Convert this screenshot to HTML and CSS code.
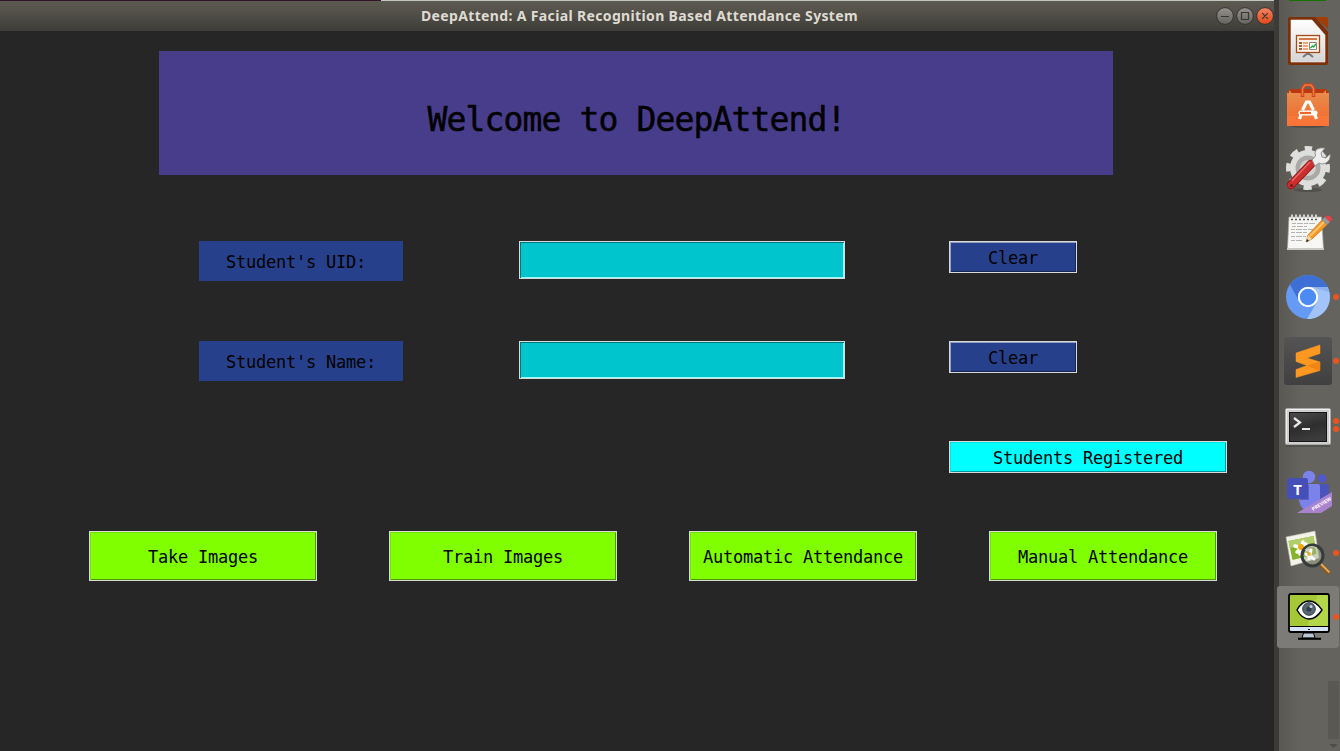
FILE: index.html
```html
<!DOCTYPE html>
<html lang="en">
<head>
<meta charset="utf-8">
<title>DeepAttend</title>
<link rel="stylesheet" href="styles.css">
</head>
<body>
<div class="desktop">
  <div class="window">
    <div class="strip"></div>
    <header class="titlebar">
      <h1 class="title">DeepAttend: A Facial Recognition Based Attendance System</h1>
      <svg class="controls" width="60" height="20" viewBox="0 0 60 20">
        <defs>
          <linearGradient id="ctl" x2="0" y2="1"><stop stop-color="#93918a"/><stop offset="1" stop-color="#65645e"/></linearGradient>
          <linearGradient id="cls" x2="0" y2="1"><stop stop-color="#f58463"/><stop offset="1" stop-color="#df4817"/></linearGradient>
        </defs>
        <g stroke="#33322e"><circle cx="10" cy="10" r="8.4" fill="url(#ctl)"/><circle cx="30" cy="10" r="8.4" fill="url(#ctl)"/><circle cx="50" cy="10" r="8.4" fill="url(#cls)"/></g>
        <path d="M6 10.500h8M26.500 6.500h7v7h-7zM47.200 7.200l5.600 5.600M52.800 7.200l-5.600 5.600" fill="none" stroke="#373630" stroke-width="1.200"/>
      </svg>
    </header>
    <main class="content">
      <div class="banner">Welcome to DeepAttend!</div>
      <div class="form">
        <label class="label" for="uid">Student's UID:</label>
        <input class="entry" id="uid" type="text">
        <button class="btn btn-blue">Clear</button>
        <label class="label" for="name">Student's Name:</label>
        <input class="entry" id="name" type="text">
        <button class="btn btn-blue">Clear</button>
        <button class="btn btn-cyan">Students Registered</button>
      </div>
      <div class="actions">
        <button class="btn btn-green">Take Images</button>
        <button class="btn btn-green">Train Images</button>
        <button class="btn btn-green">Automatic Attendance</button>
        <button class="btn btn-green">Manual Attendance</button>
      </div>
    </main>
  </div>
  <nav class="launcher">
    <div class="peek"></div>
    <svg class="item" viewBox="1279 9 61 64">
      <defs><linearGradient id="paper" x2="0" y2="1"><stop stop-color="#fff"/><stop offset="1" stop-color="#d5d5d7"/></linearGradient></defs>
      <path d="M1290 17h25l13 15v31q0 2-2 2h-36q-2 0-2-2v-44q0-2 2-2z" fill="#7d3008"/>
      <path d="M1315 17h11q2 0 2 2v10z" fill="#a33e03"/>
      <path d="M1291 20h21l13 15v27h-34z" fill="url(#paper)" stroke="#eee" stroke-width=".6"/>
      <path d="M1308 53l-5 4M1308 53l5 4M1308 52v3" stroke="#777" stroke-width="2"/>
      <rect x="1296.500" y="35.500" width="23" height="17" fill="#fff3e9" stroke="#a44b1a" stroke-width="1.300"/>
      <path d="M1299 39h18" stroke="#d17845" stroke-width="2"/>
      <path d="M1299 43h3M1299 46h3M1299 49h3" stroke="#7d3008" stroke-width="1.300"/>
      <path d="M1303 43h5M1303 46h5M1303 49h5" stroke="#e68f5b" stroke-width="1.300"/>
      <path d="M1309.500 42.500h7v7h-7z" fill="#fff" stroke="#888"/><path d="M1310.500 48l2-2 1 1 2.500-3" stroke="#22a432" stroke-width="1.300" fill="none"/>
    </svg>
    <svg class="item" viewBox="1279 73 61 64">
      <defs><linearGradient id="bag" x2="0" y2="1"><stop stop-color="#e98b4c"/><stop offset="1" stop-color="#f26728"/></linearGradient></defs>
      <ellipse cx="1308" cy="126.500" rx="17" ry="1.500" fill="#4f4d49"/>
      <path d="M1287 93l3-4h36l3 4z" fill="#b9390e"/>
      <path d="M1289 93v-3l3 3M1323 93l3-3v3" fill="#f47f48"/>
      <path d="M1287 93h42v33h-42z" fill="url(#bag)"/><path d="M1287 116h42v10h-42z" fill="#fa7b3d" opacity=".65"/>
      <path d="M1302.500 97V88.500l2.500-3.500h6l2.500 3.500V97" fill="none" stroke="#cf4517" stroke-width="3.500"/>
      <path d="M1302.500 96V88.500l2.500-3.500h6l2.500 3.500V96" fill="none" stroke="#f07745" stroke-width="1.500"/>
      <path d="M1302.500 110l4-8h3l4 8" fill="none" stroke="#fff" stroke-width="3.200"/>
      <path d="M1301 115l-1.500 4M1315 115l1.500 4" stroke="#fff" stroke-width="3.200"/>
      <rect x="1298.500" y="110.500" width="19" height="5" rx="2" fill="#fff"/><path d="M1300 113h11" stroke="#ef6427" stroke-width="2.200"/>
    </svg>
    <svg class="item" viewBox="1279 137 61 64">
      <ellipse cx="1308" cy="190" rx="14" ry="2" fill="#51504b"/>
      <circle cx="1308" cy="168" r="19" fill="none" stroke="#dedfdc" stroke-width="6" stroke-dasharray="8 6.923" stroke-dashoffset="4" transform="rotate(-90 1308 168)"/>
      <circle cx="1308" cy="168" r="15" fill="none" stroke="#dedfdd" stroke-width="6"/>
      <circle cx="1308" cy="168" r="10" fill="none" stroke="#a9aaa7" stroke-width="5"/>
      <circle cx="1308" cy="168" r="8" fill="#cfd0cd"/>
      <path d="M1291 185l20-21" stroke="#8d1616" stroke-width="8.500" stroke-linecap="round"/>
      <path d="M1291 185l20-21" stroke="#cc2d2d" stroke-width="6.800" stroke-linecap="round"/>
      <path d="M1292 181l18-19" stroke="#e66b65" stroke-width="1.500"/>
      <circle cx="1291.500" cy="185.500" r="1.500" fill="#64201e"/>
      <path d="M1312 160l3.500-4q-2-7 5-8l4.500 0-4 5 1 4 4 1 4-4q1 6-4 9-4 2-7 0l-4 3z" fill="#eee" stroke="#8a8c87" stroke-width=".9"/>
    </svg>
    <svg class="item" viewBox="1279 201 61 64">
      <path d="M1289 217h32.500l2 32h-36z" fill="#f7f7f5" stroke="#aaa9a4" stroke-width=".7"/>
      <path d="M1287 248h37v2h-37z" fill="#c9c9c5"/>
      <path d="M1291 219h28" stroke="#555" stroke-width="2.500" stroke-dasharray="2 2"/>
      <path d="M1292 219v-4.500M1296 219v-4.500M1300 219v-4.500M1304 219v-4.500M1308 219v-4.500M1312 219v-4.500M1316 219v-4.500" stroke="#ddd" stroke-width="1.800"/>
      <path d="M1292 223.500h23M1292 226.500h15M1291 229.500h22M1291 232.500h17M1291 236.500h15M1291 240.500h12" stroke="#b4b4b0" stroke-dasharray="4 1 6 1"/>
      <path d="M1306 242l2-7 14-15 5 5-15 14z" fill="#f39a27" stroke="#bb681a" stroke-width=".7"/>
      <path d="M1310 236l14-14" stroke="#ffc66b" stroke-width="2"/>
      <path d="M1306 242l2-7 4 4z" fill="#f2d6a5"/><path d="M1306 242l1-3 2 2z" fill="#222"/>
      <path d="M1322 220l3-3 5 5-3 3z" fill="#999"/><path d="M1325 217q3-3 6 0 2 3-1 5z" fill="#ec3e46"/>
    </svg>
    <svg class="item" viewBox="1279 265 61 64">
      <circle cx="1308" cy="297" r="22" fill="#659af5"/>
      <path d="M1308 287h19.500A22 22 0 0 1 1307 319l10-17z" fill="#a3c4fb"/>
      <path d="M1290 284.500A22 22 0 0 1 1327.600 287H1308a10 10 0 0 0-9.500 13z" fill="#3e6fd4"/>
      <path d="M1312 287h15.600l1.400 5z" fill="#7ca5ec" opacity=".6"/>
      <circle cx="1308" cy="297" r="9.200" fill="#4c8bf5" stroke="#fff" stroke-width="2"/>
      <circle cx="1336" cy="297" r="3" fill="#e95420"/>
    </svg>
    <svg class="item" viewBox="1279 329 61 64">
      <defs><linearGradient id="sub" x2="0" y2="1"><stop stop-color="#545454"/><stop offset="1" stop-color="#404040"/></linearGradient></defs>
      <rect x="1284" y="337" width="48" height="48" rx="3" fill="url(#sub)"/>
      <path d="M1296 353l24-8v8.500l-13 4.500 13 4v8.500l-24 7v-8l11-4-11-4z" fill="#ff9821" stroke="#ff9821" stroke-width=".5" stroke-linejoin="round"/>
      <path d="M1307 365.500l13-4v8l-1 1.500z" fill="#ef8614"/>
      <circle cx="1336" cy="361" r="3" fill="#e95420"/>
    </svg>
    <svg class="item" viewBox="1279 393 61 64">
      <defs><linearGradient id="term" x2=".3" y2="1"><stop stop-color="#4b4b4b"/><stop offset=".6" stop-color="#2e2e2e"/><stop offset="1" stop-color="#3b3b3b"/></linearGradient></defs>
      <path d="M1286 446h44" stroke="#4d4c48" stroke-width="1.500"/>
      <rect x="1285.500" y="408.500" width="45" height="36" rx="1.500" fill="#cfcfcf" stroke="#aaa"/>
      <path d="M1286.500 443v-33.500h43V443" fill="none" stroke="#eee"/>
      <rect x="1289.500" y="412.500" width="37" height="29" fill="url(#term)" stroke="#161616"/>
      <path d="M1294 418l6 4.500-6 4.500M1302 429h8" fill="none" stroke="#e9e9e9" stroke-width="2.200"/>
      <circle cx="1336" cy="421" r="3" fill="#e95420"/><circle cx="1336" cy="429" r="3" fill="#e95420"/>
    </svg>
    <svg class="item" viewBox="1279 457 61 64">
      <circle cx="1309" cy="477" r="6.200" fill="#7b83eb"/><circle cx="1322" cy="478.500" r="4.300" fill="#5059c9"/>
      <path d="M1315 484h12q2 0 2 2v10q-2 9-10 9h-6z" fill="#4b53bc"/>
      <path d="M1299 484h19q2 0 2 2v13q-1 10-10 12-10 0-11-12z" fill="#7b83eb"/>
      <path d="M1300 485h9v15h-9z" fill="#5960bd"/>
      <rect x="1287" y="478" width="21" height="21" rx="2" fill="#464eb8"/>
      <text x="1297.500" y="494.500" class="teams-letter">T</text>
      <path d="M1297 513l35-21v14l-11 7z" fill="#aa83cf"/>
      <text x="1322" y="506" class="preview" transform="rotate(-31 1321 505)">PREVIEW</text>
    </svg>
    <svg class="item" viewBox="1279 521 61 64">
      <path d="M1286 537l29-6 4 27-28 8z" fill="#f3f3e9" stroke="#b9b9ad" stroke-width=".6"/>
      <path d="M1288.500 541l25-5 3 18-24 6z" fill="#86b32c"/><path d="M1288.500 541l25-5 1 7-25 5z" fill="#b2ce6c"/>
      <g stroke="#fff" stroke-width="3.500" stroke-linecap="round"><path d="M1295 546l13 4M1303 542l-3 12M1297 552l9-8"/></g>
      <circle cx="1301" cy="547" r="3" fill="#f2a60d"/>
      <path d="M1321 565l8.500 8.500" stroke="#895717" stroke-width="4.500"/><path d="M1321 564l8.500 8.500" stroke="#e3a65b" stroke-width="2"/>
      <circle cx="1312.500" cy="555.500" r="10.500" fill="#a7b293" fill-opacity=".55" stroke="#373b3b" stroke-width="3"/>
      <path d="M1306 554l8 5M1311 550l-2 9" stroke="#fff" stroke-width="3" stroke-linecap="round"/><circle cx="1309" cy="554" r="2" fill="#eeb12d"/>
      <path d="M1305 550q5-6 12-2" fill="none" stroke="#c9ccc4"/>
      <circle cx="1336" cy="553" r="3" fill="#e95420"/>
    </svg>
    <svg class="item" viewBox="1279 585 61 64">
      <rect x="1277" y="586" width="62" height="62" rx="3" fill="#7c7b77"/>
      <rect x="1289" y="594" width="40" height="38" rx="2" fill="#a5c936"/><path d="M1318 594h9l2 2v31h-22z" fill="#b3d74b"/>
      <path d="M1289 627h40v5h-40z" fill="#d5e4f7"/>
      <rect x="1289" y="594" width="40" height="38" rx="2" fill="none" stroke="#000" stroke-width="1.800"/>
      <path d="M1289 626.500h40" stroke="#000"/><path d="M1308 629.500h2" stroke="#000"/>
      <path d="M1303.500 633h10l1.500 5h-13z" fill="#b9c6d6" stroke="#000"/><path d="M1298 638.800h23" stroke="#000" stroke-width="2"/>
      <path d="M1297 610q5-9 12-9t13 9q-6 9-13 9t-12-9z" fill="#fff" stroke="#000" stroke-width="1.500"/>
      <circle cx="1309" cy="609" r="6.300" fill="#596673" stroke="#333d47"/><circle cx="1309" cy="609" r="2.600" fill="#343d46"/><circle cx="1311" cy="606.500" r="1.500" fill="#cbd5e2"/>
      <circle cx="1336" cy="617" r="3" fill="#e95420"/>
    </svg>
    <svg class="scroll" viewBox="1279 649 61 102">
      <path d="M1328 681h11v58h-11z" fill="#595853"/><path d="M1329.500 744h8l-4 4z" fill="#4d4c48"/>
    </svg>
  </nav>
</div>
</body>
</html>
```
FILE: styles.css
```css
* { box-sizing: border-box; }
body { margin: 0; overflow: hidden; background: #262626; }
.desktop { display: grid; grid-template-columns: 1279px 61px; width: 1340px; height: 751px; }

.window {
  border-right: 5px solid #3c3b37;
  background: #262626;
}
.strip { height: 1px; background: linear-gradient(90deg, #33152a 381px, #c4c6c1 381px); }
.titlebar {
  display: grid;
  grid-template-columns: 60px 1fr 60px;
  align-items: center;
  height: 30px;
  background: linear-gradient(#5c5a50, #55534b 30%, #3d3c38);
}
.title {
  grid-column: 2;
  margin: 0 0 0 5px;
  text-align: center;
  font: bold 14px/30px "Noto Sans", "Open Sans", sans-serif;
  letter-spacing: 0.355px;
  color: #dfdbd2;
  white-space: nowrap;
}
.controls { margin-left: 1px; }

.content {
  font-family: "DejaVu Sans Mono", monospace;
  font-size: 17px;
  letter-spacing: -0.235px;
  color: #000;
  padding-top: 20px;
}
.banner {
  width: 954px;
  height: 124px;
  margin-left: 159px;
  padding: 13px 0 0 1px;
  background: #483d8b;
  text-align: center;
  font-size: 33px;
  line-height: 112px;
  letter-spacing: -0.87px;
  -webkit-text-stroke: 0.5px #000;
}
.form {
  display: grid;
  grid-template-columns: 320px 430px 278px;
  grid-auto-rows: 100px;
  align-items: start;
  margin: 66px 0 0 199px;
  height: 290px;
}
.label {
  width: 204px;
  height: 40px;
  padding: 1px 0 0 27px;
  line-height: 40px;
  background: #27408b;
}
.entry {
  width: 326px;
  height: 38px;
  padding: 4px;
  font: inherit;
  background: #00c5cd;
  border: 1px solid #d9d9d9;
  border-radius: 0;
  outline: none;
  box-shadow: inset 1px 1px #00767b, inset -1px -1px #8fffff;
}
.btn {
  height: 32px;
  padding: 1px 0 0;
  font: inherit;
  letter-spacing: inherit;
  color: #000;
  border: 1px solid #d9d9d9;
  border-radius: 0;
}
.btn-blue { width: 128px; background: #27408b; box-shadow: inset 1px 1px #93a0c5, inset -1px -1px #172653; }
.btn-cyan { grid-column: 3; width: 278px; background: #00ffff; box-shadow: inset 1px 1px #00e5e5, inset -1px -1px #009999; }
.actions { display: grid; grid-template-columns: repeat(4, 228px); gap: 72px; margin-left: 89px; }
.btn-green { height: 50px; background: #7fff00; padding-top: 2px; box-shadow: inset 1px 1px #72e500, inset -1px -1px #4c9900; }

.launcher {
  display: flex;
  flex-direction: column;
  background: linear-gradient(90deg, #595852, #64635e 22px);
}
.peek { width: 37px; height: 1px; margin: 0 0 8px 10px; background: #137200; }
.item { display: block; width: 61px; height: 64px; flex: none; overflow: visible; }
.scroll { display: block; width: 61px; height: 102px; flex: none; }
.teams-letter { font: bold 15px "Open Sans", sans-serif; fill: #fff; text-anchor: middle; }
.preview { font: bold 5px "Open Sans", sans-serif; fill: #fff; text-anchor: middle; }
```
